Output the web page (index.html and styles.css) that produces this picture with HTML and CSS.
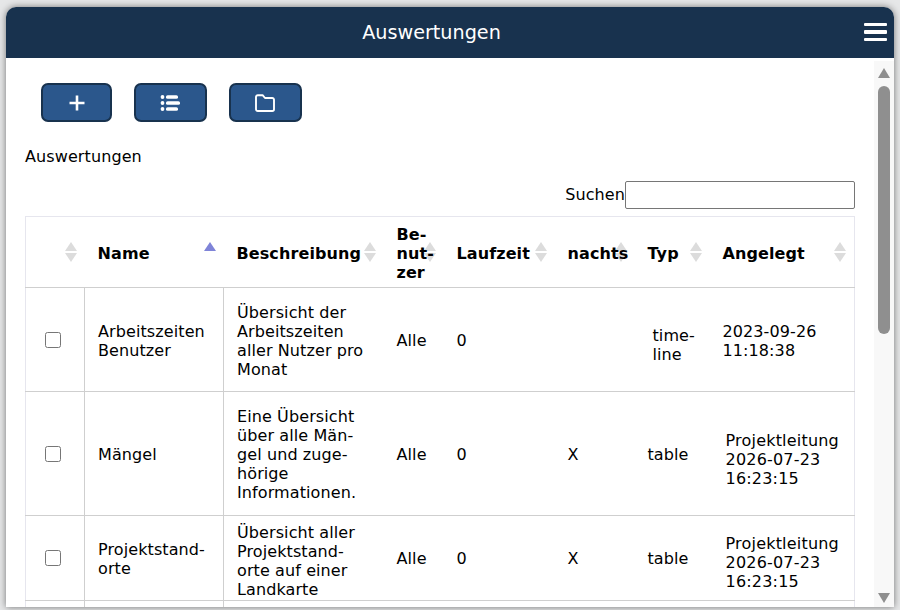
FILE: index.html
```html
<!DOCTYPE html>
<html lang="de">
<head>
<meta charset="utf-8">
<title>Auswertungen</title>
<link rel="stylesheet" href="styles.css">
</head>
<body>
<div class="window">
  <header class="titlebar">
    <h1 class="title">Auswertungen</h1>
    <button class="menu" aria-label="Menü"><span></span><span></span><span></span></button>
  </header>
  <div class="body">
    <main class="content">
      <div class="toolbar">
        <button class="tool tool-add" aria-label="Neu">
          <svg width="18" height="18" viewBox="0 0 18 18"><path d="M9 1.5v15M1.5 9h15" stroke="#fff" stroke-width="2.6" fill="none"/></svg>
        </button>
        <button class="tool tool-list" aria-label="Liste">
          <svg class="nudge" width="20" height="18" viewBox="0 0 20 18"><g fill="#fff"><circle cx="2.5" cy="3" r="1.9"/><circle cx="2.5" cy="9" r="1.9"/><circle cx="2.5" cy="15" r="1.9"/><rect x="6" y="1.2" width="12" height="3.6" rx="1.6"/><rect x="6" y="7.2" width="14" height="3.6" rx="1.6"/><rect x="6" y="13.2" width="12" height="3.6" rx="1.6"/></g></svg>
        </button>
        <button class="tool tool-folder" aria-label="Ordner">
          <svg class="nudge" width="20" height="18" viewBox="0 0 20 18"><path d="M2.8 1.2h4.8l2.4 2.8h7.2a1.8 1.8 0 0 1 1.8 1.8v9.4a1.8 1.8 0 0 1-1.8 1.8H2.8A1.8 1.8 0 0 1 1 15.2V3a1.8 1.8 0 0 1 1.8-1.8z" fill="none" stroke="#fff" stroke-width="1.9" stroke-linejoin="round"/></svg>
        </button>
      </div>
      <div class="caption">Auswertungen</div>
      <div class="search"><label for="q">Suchen</label><input id="q" type="text"></div>
      <table class="grid">
        <colgroup>
          <col class="c1"><col class="c2"><col class="c3"><col class="c4"><col class="c5"><col class="c6"><col class="c7"><col class="c8">
        </colgroup>
        <thead>
          <tr>
            <th><i class="sort"></i></th>
            <th>Name<i class="sort asc"></i></th>
            <th>Beschreibung<i class="sort"></i></th>
            <th>Be-<br>nut-<br>zer<i class="sort"></i></th>
            <th>Laufzeit<i class="sort"></i></th>
            <th>nachts<i class="sort"></i></th>
            <th>Typ<i class="sort"></i></th>
            <th>Angelegt<i class="sort"></i></th>
          </tr>
        </thead>
        <tbody>
          <tr class="r1">
            <td class="check"><input type="checkbox" aria-label="Arbeitszeiten Benutzer"></td>
            <td class="line">Arbeitszeiten<br>Benutzer</td>
            <td class="line">Übersicht der<br>Arbeitszeiten<br>aller Nutzer pro<br>Monat</td>
            <td>Alle</td><td>0</td><td></td>
            <td class="inset">time-<br>line</td>
            <td>2023-09-26<br>11:18:38</td>
          </tr>
          <tr class="r2">
            <td class="check"><input type="checkbox" aria-label="Mängel"></td>
            <td class="line">Mängel</td>
            <td class="line">Eine Übersicht<br>über alle Män-<br>gel und zuge-<br>hörige<br>Informationen.</td>
            <td>Alle</td><td>0</td><td>X</td><td>table</td>
            <td class="who">Projektleitung<br>2026-07-23<br>16:23:15</td>
          </tr>
          <tr class="r3">
            <td class="check"><input type="checkbox" aria-label="Projektstandorte"></td>
            <td class="line">Projektstand-<br>orte</td>
            <td class="line low">Übersicht aller<br>Projektstand-<br>orte auf einer<br>Landkarte</td>
            <td>Alle</td><td>0</td><td>X</td><td>table</td>
            <td class="who">Projektleitung<br>2026-07-23<br>16:23:15</td>
          </tr>
          <tr class="r4"><td></td><td class="line"></td><td class="line"></td><td></td><td></td><td></td><td></td><td></td></tr>
        </tbody>
      </table>
    </main>
    <div class="scrollbar">
      <span class="arrow up"></span>
      <span class="thumb"></span>
      <span class="arrow down"></span>
    </div>
  </div>
</div>
</body>
</html>
```

FILE: styles.css
```css
* { box-sizing: border-box; }
html, body { height: 100%; }
body {
  margin: 0;
  padding: 7px 6px 3px;
  background: #e6e7e8;
  overflow: hidden;
  font-family: "DejaVu Sans", sans-serif;
  font-size: 16px;
  letter-spacing: .1px;
  color: #000;
}
.window {
  height: 600px;
  display: flex;
  flex-direction: column;
  background: #fff;
  border-radius: 10px 10px 0 0;
  box-shadow: 0 0 7px rgba(0, 0, 0, .5);
  overflow: hidden;
}
.titlebar {
  flex: none;
  height: 51px;
  padding-right: 37px;
  background: #18324e;
  display: flex;
  align-items: center;
  justify-content: center;
  position: relative;
}
.title {
  margin: 0;
  color: #fff;
  font-size: 19.2px;
  font-weight: 400;
  letter-spacing: 0;
}
.menu {
  position: absolute;
  right: 7px;
  top: 16px;
  width: 23px;
  padding: 0;
  border: 0;
  background: none;
  display: flex;
  flex-direction: column;
  gap: 3.9px;
}
.menu span { display: block; height: 3.4px; background: #fff; border-radius: 1px; }
.body { flex: 1; min-height: 0; display: flex; }
.content { flex: 1; min-width: 0; padding: 25px 19px 0; overflow: hidden; }
.toolbar { display: flex; padding-left: 16px; }
.tool {
  height: 39px;
  padding: 0;
  display: flex;
  align-items: center;
  justify-content: center;
  background: #2b578c;
  border: 2px solid #18324e;
  border-radius: 7px;
}
.tool-add { width: 71px; margin-right: 22px; }
.tool-list { width: 73px; margin-right: 22px; }
.tool-folder { width: 73px; }
.nudge { margin-right: 2px; }
.caption { margin-top: 26px; height: 18px; line-height: 18px; }
.search { margin-top: 15px; display: flex; justify-content: flex-end; align-items: center; height: 28px; }
.search label { padding-bottom: 2px; }
.search input {
  width: 230px;
  height: 28px;
  margin: 0;
  padding: 0 2px;
  border: 1px solid #767676;
  border-radius: 2px;
  background: #fff;
}
.grid {
  isolation: isolate;
  margin-top: 7px;
  width: 829px;
  table-layout: fixed;
  border-collapse: collapse;
  border: 1px solid #e6e6ee;
  line-height: 19px;
}
.c1 { width: 59px; }
.c2 { width: 139px; }
.c3 { width: 160px; }
.c4 { width: 60px; }
.c5 { width: 111px; }
.c6 { width: 80px; }
.c7 { width: 75px; }
.c8 { width: 145px; }
th, td { padding: 2px 0 0 13px; text-align: left; vertical-align: middle; }
thead tr { height: 71px; }
th {
  position: relative;
  font-weight: 700;
  border-bottom: 1px solid #cfcfcf;
  white-space: nowrap;
}
td { border-top: 1px solid #cfcfcf; }
tbody tr:first-child td { border-top: 0; }
.r1 { height: 104px; }
.r2 { height: 124px; }
.r3 { height: 85px; }
.r3 td { padding-top: 0; }
.r4 { height: 30px; }
.line { border-left: 1px solid #cfcfcf; }
td.check { padding: 0; text-align: center; }
.check input { display: block; width: 16px; height: 16px; margin: 0 auto; accent-color: #2b578c; transform: translateX(-2px); }
td.inset { padding-left: 18px; padding-top: 10px; }
td.who { padding-left: 16px; padding-top: 12px; letter-spacing: .2px; }
.r3 td.who { padding-top: 8px; }
.r3 td.line { padding-top: 2px; }
.r3 td.low { padding-top: 6px; }
.sort {
  position: absolute;
  z-index: -1;
  right: 8px;
  top: 25px;
  width: 12px;
  height: 20px;
}
.sort::before, .sort::after {
  content: "";
  position: absolute;
  left: 0;
  border-left: 6px solid transparent;
  border-right: 6px solid transparent;
}
.sort::before { top: 0; border-bottom: 9px solid #dcdcdc; }
.sort::after { bottom: 0; border-top: 9px solid #dcdcdc; }
.sort.asc::before { border-bottom-color: #7f84d8; }
.sort.asc::after { display: none; }
.scrollbar {
  flex: none;
  width: 20px;
  margin-top: 3px;
  background: #f8f8f8;
  display: flex;
  flex-direction: column;
  align-items: center;
  padding-top: 7px;
}
.thumb { width: 12px; height: 248px; margin-top: 8px; background: #8f8f8f; border-radius: 6px; }
.arrow { width: 0; height: 0; border-left: 6px solid transparent; border-right: 6px solid transparent; }
.arrow.up { border-bottom: 10px solid #8f8f8f; }
.arrow.down { margin-top: auto; margin-bottom: 4px; border-top: 10px solid #8f8f8f; }
```
